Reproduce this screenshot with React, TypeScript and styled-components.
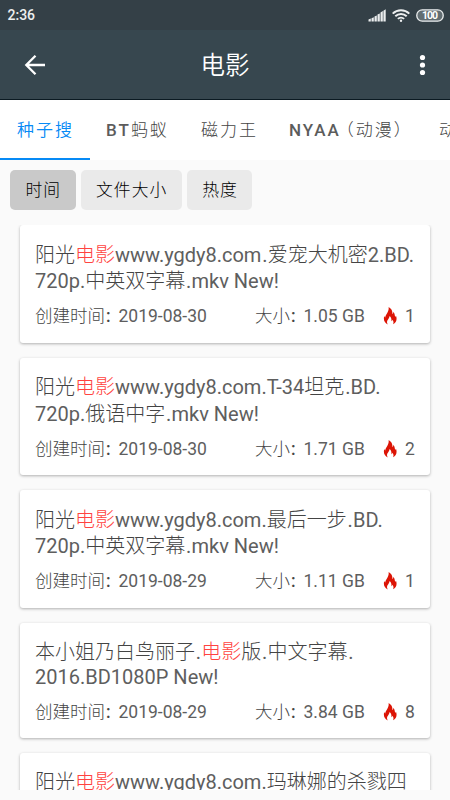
import React from "react";
import styled, { createGlobalStyle } from "styled-components";

const Global = createGlobalStyle`
  * { box-sizing: border-box; }
  body { margin: 0; background: #fafafa; overflow: hidden; }
`;

const Screen = styled.div`
  width: 450px;
  height: 800px;
  padding-bottom: 10px;
  display: flex;
  flex-direction: column;
  overflow: hidden;
  background: #fafafa;
  color: #444;
  font-family: Roboto, "Noto Sans CJK SC", sans-serif;
  white-space: nowrap;
`;

const StatusBar = styled.div`
  flex: none;
  height: 30px;
  padding: 0 6px 0 7.5px;
  display: flex;
  align-items: center;
  justify-content: space-between;
  background: #344047;
  color: #eceeef;
  font-size: 14px;
  font-weight: 500;
`;

const StatusIcons = styled.div`
  display: flex;
  align-items: center;
  gap: 6px;
`;

const Header = styled.header`
  flex: none;
  height: 70px;
  padding: 0 16px 0 24px;
  display: grid;
  grid-template-columns: 24px 1fr 20px;
  align-items: center;
  background: #37474f;
  border-bottom: 1px solid #0b1a22;
  color: #fff;
`;

const Title = styled.h1`
  margin: 0;
  padding: 3px 12px 0 0;
  text-align: center;
  font-size: 24.5px;
  line-height: 30px;
  font-weight: 350;
`;

const Tabs = styled.nav`
  flex: none;
  height: 60px;
  display: flex;
  background: #fff;
  overflow: hidden;
`;

const Tab = styled.div<{ $active?: boolean; $width: number }>`
  flex: none;
  width: ${(p) => p.$width}px;
  padding-left: 17px;
  border-bottom: 2px solid ${(p) => (p.$active ? "#078af5" : "transparent")};
  color: ${(p) => (p.$active ? "#078af5" : "#444")};
  font-size: 17px;
  font-weight: ${(p) => (p.$active ? 350 : 300)};
  letter-spacing: 2px;
  line-height: 61px;
`;

const Strong = styled.span`
  margin-left: -1px;
  font-weight: 500;
  color: #5c5c5c;
`;

const Paren = styled.span`
  margin-left: -4px;
`;

const Filters = styled.div`
  flex: none;
  height: 65px;
  padding: 10px 10px 15px;
  display: flex;
  gap: 5px;
`;

const Filter = styled.button<{ $active?: boolean }>`
  height: 40px;
  padding: 0 14.5px 3px 15.5px;
  border: 0;
  border-radius: 5px;
  background: ${(p) => (p.$active ? "#c9c9c9" : "#eaeaea")};
  color: #000;
  font-family: inherit;
  font-size: 16.8px;
  font-weight: 300;
  letter-spacing: 1px;
`;

const List = styled.main`
  flex: 1;
  min-height: 0;
  padding: 0 20px;
  overflow: hidden;
`;

const Card = styled.article<{ $height: number }>`
  height: ${(p) => p.$height}px;
  margin-bottom: 15px;
  padding: 15.5px 15px 0;
  display: flex;
  flex-direction: column;
  background: #fff;
  border-radius: 3px;
  box-shadow: 0 1px 3px rgba(0, 0, 0, 0.3);

  &:last-child {
    padding-top: 15px;
  }
`;

const Line = styled.div<{ $height: number }>`
  height: ${(p) => p.$height}px;
  line-height: 28px;
  font-size: 20px;
  font-weight: 300;
`;

const Latin = styled.span`
  font-weight: 400;
  color: #5e5e5e;
`;

const Dot = styled(Latin)`
  padding: 0 0.2px 0 0.8px;
`;

const Hit = styled.span`
  color: #ff4340;
`;

const Meta = styled.div`
  margin-top: 9.5px;
  display: grid;
  grid-template-columns: 220px 128px auto;
  align-items: center;
  font-size: 17.5px;
  line-height: 26px;
  font-weight: 300;
`;

const Colon = styled.span`
  display: inline-block;
  width: 13.5px;
  padding-left: 1px;
  font-weight: 500;
`;

const Heat = styled.span`
  display: flex;
  align-items: center;
  gap: 8px;
  font-weight: 400;
  color: #5e5e5e;
`;

const Flame = () => (
  <svg width="14" height="18" viewBox="0 0 14 18" fill="#dc1405">
    <path transform="translate(.6 0)" d="M5 0C7.900 1.700 9.200 4.100 8.700 7.200c.8-.6 1.200-1.400 1.100-2.400 1.600 2.100 1.100 3.600 1.900 5 .4-.2.6-.6.7-1.100 1.300 3.600.4 6.700-3 8.600.8-1.700.6-3.200-.6-4.500-.2.8-.5 1.200-1 1.400.3-2.200-.3-3.900-1.900-5.200.2 2.500-2.700 3.800-2.500 6.200 0 .9.400 1.600 1 2.200C.9 16.100-.4 12.700.6 9.100c.3.8.6 1.200 1.100 1.400C1.500 7.700 5.800 5 5 0z" />
  </svg>
);

type Part = { t: string; kind?: "latin" | "hit" | "dot" };
const l = (t: string): Part => ({ t, kind: "latin" });
const h = (t: string): Part => ({ t, kind: "hit" });
const c = (t: string): Part => ({ t });
const dot: Part = { t: ".", kind: "dot" };

const items: { height: number; lines: Part[][]; date: string; size: string; heat: number }[] = [
  {
    height: 117.5,
    lines: [
      [c("阳光"), h("电影"), l("www.ygdy8.com"), dot, c("爱宠大机密"), l("2.BD.")],
      [l("720p."), c("中英双字幕"), dot, l("mkv New!")],
    ],
    date: "2019-08-30", size: "1.05 GB", heat: 1,
  },
  {
    height: 117.5,
    lines: [
      [c("阳光"), h("电影"), l("www.ygdy8.com.T-34"), c("坦克"), dot, l("BD.")],
      [l("720p."), c("俄语中字"), dot, l("mkv New!")],
    ],
    date: "2019-08-30", size: "1.71 GB", heat: 2,
  },
  {
    height: 117.5,
    lines: [
      [c("阳光"), h("电影"), l("www.ygdy8.com."), c("最后一步"), dot, l("BD.")],
      [l("720p."), c("中英双字幕"), dot, l("mkv New!")],
    ],
    date: "2019-08-29", size: "1.11 GB", heat: 1,
  },
  {
    height: 115.5,
    lines: [
      [c("本小姐乃白鸟丽子"), dot, h("电影"), c("版"), dot, c("中文字幕"), dot],
      [l("2016.BD1080P New!")],
    ],
    date: "2019-08-29", size: "3.84 GB", heat: 8,
  },
  {
    height: 117.5,
    lines: [[c("阳光"), h("电影"), l("www.ygdy8.com."), c("玛琳娜的杀戮四")]],
    date: "2019-08-29", size: "1.20 GB", heat: 1,
  },
];

const partTypes = { latin: Latin, hit: Hit, dot: Dot };

const renderPart = (p: Part, i: number) => {
  const Text = p.kind ? partTypes[p.kind] : "span";
  return <Text key={i}>{p.t}</Text>;
};

export default function App() {
  return (
    <>
      <Global />
      <Screen>
        <StatusBar>
          <span>2:36</span>
          <StatusIcons>
            <svg width="18" height="13" viewBox="0 0 18 13" fill="#eceeef">
              <path d="M.5 12.500v-2l2.300-1v3zM3.500 12.500V9.300l2.300-1v4.200zM6.500 12.500V7.600l2.300-1.200v6.100zM9.500 12.500V5.600l2.300-1.200v8.100zM12.500 12.500V3.600l2.300-1.500v10.400zM15.400 12.500V1.700l2.300-1.500v12.300z" />
            </svg>
            <svg width="18" height="13" viewBox="0 0 18 13" fill="none" stroke="#eceeef" strokeWidth="2">
              <path d="M.7 4.600a12 12 0 0 1 16.600 0M3.300 7.300a8.200 8.200 0 0 1 11.400 0M5.900 9.900a4.500 4.500 0 0 1 6.200 0" />
              <circle cx="9" cy="11.800" r="1.200" fill="#eceeef" stroke="none" />
            </svg>
            <svg width="28" height="13" viewBox="0 0 28 13">
              <rect x=".8" y=".8" width="26.400" height="11.400" rx="5.500" fill="#626d72" stroke="#eceeef" strokeWidth="1.300" />
              <text x="14" y="10.300" textAnchor="middle" fontSize="10.500" fontWeight="700" fill="#fff" textLength="16">100</text>
            </svg>
          </StatusIcons>
        </StatusBar>
        <Header>
          <svg width="22" height="22" viewBox="0 0 22 22" fill="none" stroke="#fff" strokeWidth="2.300">
            <path d="M21 11H2.500M11.500 1.800 2.300 11l9.200 9.200" />
          </svg>
          <Title>电影</Title>
          <svg width="20" height="22" viewBox="0 0 20 22" fill="#fff">
            <circle cx="8.500" cy="3.500" r="2.600" />
            <circle cx="8.500" cy="11" r="2.600" />
            <circle cx="8.500" cy="18.500" r="2.600" />
          </svg>
        </Header>
        <Tabs>
          <Tab $active $width={90}>种子搜</Tab>
          <Tab $width={94}><Strong>BT</Strong>蚂蚁</Tab>
          <Tab $width={89}>磁力王</Tab>
          <Tab $width={149}><Strong>NYAA</Strong><Paren>（</Paren>动漫）</Tab>
          <Tab $width={90}>动漫花园</Tab>
        </Tabs>
        <Filters>
          <Filter $active>时间</Filter>
          <Filter>文件大小</Filter>
          <Filter>热度</Filter>
        </Filters>
        <List>
          {items.map((it, i) => (
            <Card key={i} $height={it.height}>
              {it.lines.map((line, j) => (
                <Line key={j} $height={j === 0 && it.height < 117 ? 25 : 26.5}>{line.map(renderPart)}</Line>
              ))}
              <Meta>
                <span>创建时间<Colon>:</Colon><Latin>{it.date}</Latin></span>
                <span>大小<Colon>:</Colon><Latin>{it.size}</Latin></span>
                <Heat><Flame />{it.heat}</Heat>
              </Meta>
            </Card>
          ))}
        </List>
      </Screen>
    </>
  );
}
